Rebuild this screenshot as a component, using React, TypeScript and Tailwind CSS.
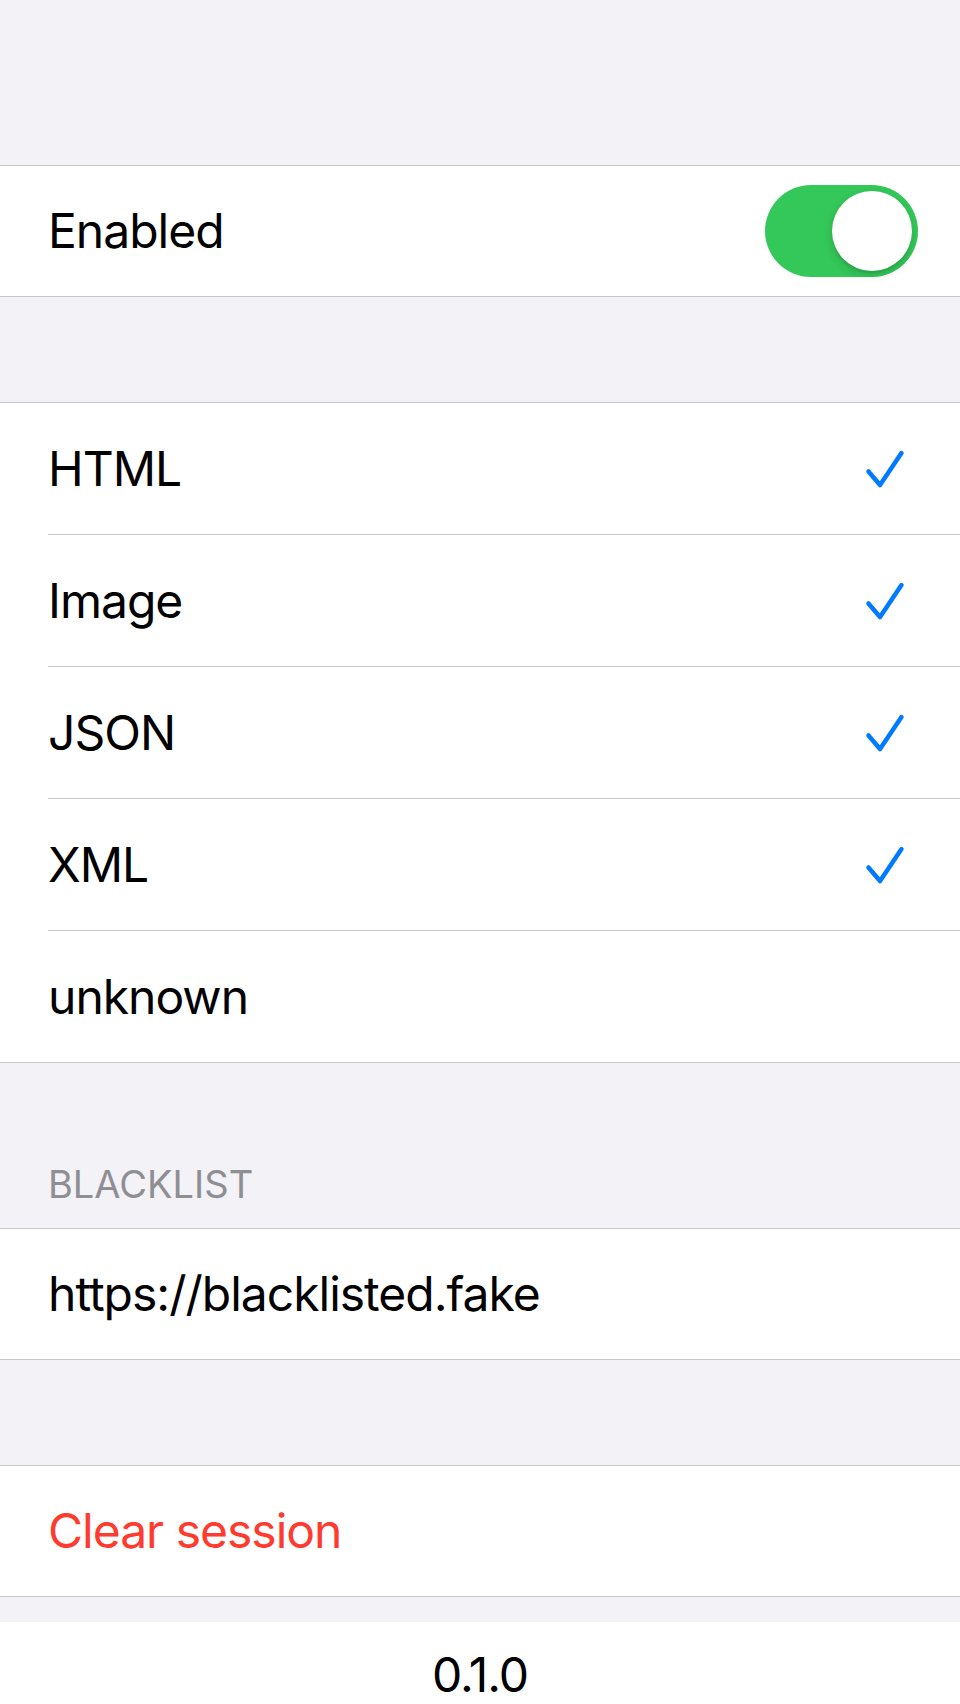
import React from "react";

const types = [
  { name: "HTML", on: true },
  { name: "Image", on: true },
  { name: "JSON", on: true },
  { name: "XML", on: true },
  { name: "unknown", on: false },
];

function Check() {
  return (
    <svg width="44" height="44" viewBox="0 0 44 44" fill="none">
      <path
        d="M6.5 24.5 L18 38 L39.5 6"
        stroke="#007aff"
        strokeWidth="4.5"
        strokeLinecap="round"
        strokeLinejoin="round"
      />
    </svg>
  );
}

function Toggle() {
  return (
    <div className="w-[153px] h-[92px] rounded-full bg-[#34c759] relative">
      <div className="absolute right-[6px] top-[6px] w-[80px] h-[80px] rounded-full bg-white shadow-[0_4px_10px_rgba(0,0,0,0.15),0_3px_1px_rgba(0,0,0,0.06)]" />
    </div>
  );
}

export default function App() {
  return (
    <div
      className="min-h-[1704px] bg-[#f2f2f7] text-black"
      style={{ fontFamily: "Inter, 'Noto Sans', sans-serif" }}
    >
      <div className="h-[165px]" />

      {/* enabled */}
      <div className="bg-white border-y border-[#c8c7cc]">
        <div className="h-[130px] flex items-center justify-between pl-[48px] pr-[42px]">
          <span className="text-[48px] tracking-[-1px]">Enabled</span>
          <Toggle />
        </div>
      </div>

      <div className="h-[105px]" />

      {/* content types */}
      <div className="bg-white border-t border-[#c8c7cc]">
        {types.map((t, i) => {
          const last = i === types.length - 1;
          return (
            <div
              key={t.name}
              className={`pl-[48px] ${last ? "border-b border-[#c8c7cc]" : ""}`}
            >
              <div
                className={`h-[131px] flex items-center justify-between pr-[54px] ${
                  last ? "" : "border-b border-[#c8c7cc] h-[132px]"
                }`}
              >
                <span className="text-[48px] tracking-[-1px]">{t.name}</span>
                {t.on && <Check />}
              </div>
            </div>
          );
        })}
      </div>

      <div className="h-[165px] flex items-end pl-[48px] pb-[25px]">
        <span className="text-[38px] text-[#8e8e93] uppercase leading-none">
          Blacklist
        </span>
      </div>

      <div className="bg-white border-y border-[#c8c7cc]">
        <div className="h-[130px] flex items-center pl-[48px]">
          <span className="text-[48px] tracking-[-1px]">https://blacklisted.fake</span>
        </div>
      </div>

      <div className="h-[105px]" />

      <div className="bg-white border-y border-[#c8c7cc]">
        <div className="h-[130px] flex items-center pl-[48px]">
          <span className="text-[48px] tracking-[-1px] text-[#ff3b30]">Clear session</span>
        </div>
      </div>

      <div className="h-[25px]" />

      <div className="bg-white h-[120px] flex justify-center pt-[29px]">
        <span className="text-[48px] tracking-[-1px] leading-none">0.1.0</span>
      </div>
    </div>
  );
}
